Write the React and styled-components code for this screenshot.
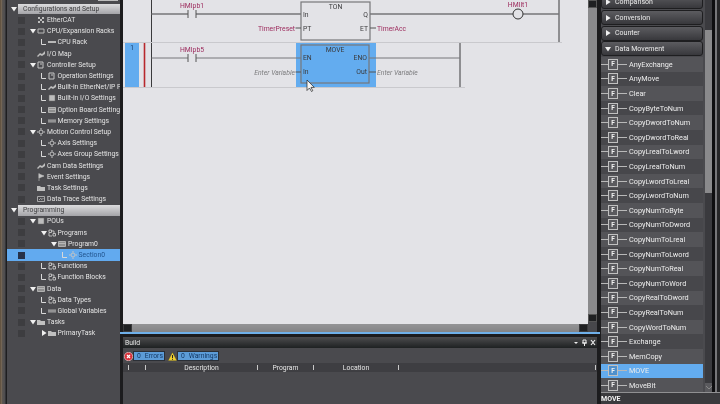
import React from 'react';
import styled, { createGlobalStyle } from 'styled-components';

const FONT = 'Roboto, "Liberation Sans", sans-serif';

const Global = createGlobalStyle`
  html, body { margin: 0; padding: 0; background: #1c1c1e; }
  body { width: 720px; height: 404px; overflow: hidden; font-family: ${FONT}; }
`;

const Screen = styled.div`
  width: 720px;
  height: 404px;
  display: flex;
  overflow: hidden;
  background: #1c1c1e;
  filter: blur(0.4px);
`;

/* left project tree */
const Sidebar = styled.div`
  width: 120px;
  flex: none;
  display: flex;
  background: #4a4a4e;
  overflow: hidden;
`;

const EdgeStrip = styled.div`
  width: 7px;
  flex: none;
  background: linear-gradient(90deg, #3c342c 0, #8a7458 1px, #5c5650 2px, #4c4c50 5px, #1e1e20 6px);
`;

const Tree = styled.div`
  flex: 1;
  min-width: 0;
  display: flex;
  flex-direction: column;
`;

const TopStub = styled.div`
  height: 1.3px;
  width: 20px;
  flex: none;
  margin: 0 0 2px 91px;
  border: solid #bdbdbd;
  border-width: 0 1px 1px 1px;
  box-sizing: border-box;
`;

const Row = styled.div`
  height: 11.2px;
  flex: none;
  display: flex;
  align-items: center;
  white-space: nowrap;
  font-size: 6.8px;
  color: ${p => (p.$selected ? '#22558f' : '#e4e4e4')};
  background: ${p => (p.$selected ? '#62aaef' : 'transparent')};
`;

const Check = styled.span`
  width: 7px;
  height: 7px;
  margin-left: 11px;
  flex: none;
  background: ${p => (p.$selected ? '#26324a' : '#3d3d40')};
`;

const Indent = styled.span`
  flex: none;
  display: flex;
  align-items: center;
  justify-content: flex-end;
  width: ${p => p.$width}px;
  margin-right: 1px;
`;

const Header = styled.div`
  height: 11.2px;
  flex: none;
  display: flex;
  align-items: center;
  padding-left: 4px;
`;

const HeaderBar = styled.div`
  flex: 1;
  height: 10.5px;
  margin-left: 1px;
  padding-left: 5px;
  display: flex;
  align-items: center;
  font-size: 6.8px;
  color: #3c3c3e;
  background: linear-gradient(180deg, #dcdcde, #a4a4a8);
`;

const IconBox = styled.svg`
  width: 8px;
  height: 8px;
  flex: none;
  margin-right: 2px;
`;

const ArrowSvg = styled.svg`
  width: 6px;
  height: 6px;
  flex: none;
`;

const Arrow = ({ open }) => (
  <ArrowSvg viewBox="0 0 6 6">
    <path d={open ? 'M0 1h6L3 5.6z' : 'M1 0v6l4.6-3z'} fill="#f0f0f0" />
  </ArrowSvg>
);

const ElbowSvg = styled.svg`
  width: 5px;
  height: 6px;
  flex: none;
  margin-right: 1px;
`;

const Elbow = () => (
  <ElbowSvg viewBox="0 0 5 6">
    <path d="M.5 0v5.5H5" stroke="#d8d8d8" fill="none" />
  </ElbowSvg>
);

const glyphs = {
  grid: <path d="M1 1h2v2H1zM5 1h2v2H5zM1 5h2v2H1zM5 5h2v2H5zM3 3h2v2H3z" fill="#bdbdbd" />,
  rack: <path d="M1 2h6v4H1z" fill="none" stroke="#b8b8b8" />,
  bar: <path d="M0 3h8v2H0z" fill="#b8b8b8" />,
  map: <path d="M0 6l3-3 2 1 3-3v3L5 6 3 5 1 7z" fill="#bdbdbd" />,
  doc: <path d="M1 1h5v6H1zM3 3h2" fill="none" stroke="#c4c4c4" />,
  sheet: <path d="M1 1h6v6H1z" fill="#bdbdbd" stroke="#6a6a6a" strokeWidth=".5" />,
  gear: (
    <g fill="none" stroke="#c4c4c4">
      <circle cx="4" cy="4" r="2" />
      <path d="M4 0v1.5M4 6.5V8M0 4h1.5M6.5 4H8" />
    </g>
  ),
  flag: <path d="M2 0v8M2 1l5 2-5 2z" fill="#c4c4c4" stroke="#c4c4c4" strokeWidth=".6" />,
  folder: <path d="M0 2h3l1 1h4v4H0z" fill="#c0c0c0" />,
  chart: <path d="M.5 1.5h7v5h-7zM2 5l1.5-1.5L5 4.5 6.5 3" fill="none" stroke="#c0c0c0" strokeWidth=".8" />,
  block: <path d="M1 1h2.5v2.5H1zM5 4.5h2.5V7H5zM3.5 2H6v2.5M1 4v3h3" fill="none" stroke="#c8c8c8" strokeWidth=".9" />,
  table: <path d="M.5 1.5h7v5h-7zM.5 3.5h7" fill="#8f8f8f" stroke="#c0c0c0" strokeWidth=".8" />,
  vars: <path d="M1 2v4M3 2v4M5 2v4M7 2v4M0 4h8" stroke="#bdbdbd" strokeWidth=".8" />,
};

const Glyph = ({ name }) => <IconBox viewBox="0 0 8 8">{glyphs[name]}</IconBox>;

const Label = styled.span`
  flex: none;
`;

// level 0 sits directly under a section header
const TreeRow = ({ level, arrow, elbow, icon, text, selected }) => (
  <Row $selected={selected}>
    <Check $selected={selected} />
    <Indent $width={11 + level * 10.5}>
      {arrow && <Arrow open={arrow === 'open'} />}
      {elbow && <Elbow />}
    </Indent>
    <Glyph name={icon} />
    <Label>{text}</Label>
  </Row>
);

const projectRows = [
  { header: 'Configurations and Setup' },
  { level: 0, icon: 'grid', text: 'EtherCAT' },
  { level: 0, arrow: 'open', icon: 'rack', text: 'CPU/Expansion Racks' },
  { level: 1, elbow: true, icon: 'bar', text: 'CPU Rack' },
  { level: 0, icon: 'map', text: 'I/O Map' },
  { level: 0, arrow: 'open', icon: 'doc', text: 'Controller Setup' },
  { level: 1, elbow: true, icon: 'doc', text: 'Operation Settings' },
  { level: 1, elbow: true, icon: 'map', text: 'Built-in EtherNet/IP Port Settings' },
  { level: 1, elbow: true, icon: 'sheet', text: 'Built-in I/O Settings' },
  { level: 1, elbow: true, icon: 'table', text: 'Option Board Settings' },
  { level: 1, elbow: true, icon: 'vars', text: 'Memory Settings' },
  { level: 0, arrow: 'open', icon: 'gear', text: 'Motion Control Setup' },
  { level: 1, elbow: true, icon: 'gear', text: 'Axis Settings' },
  { level: 1, elbow: true, icon: 'gear', text: 'Axes Group Settings' },
  { level: 0, icon: 'map', text: 'Cam Data Settings' },
  { level: 0, icon: 'flag', text: 'Event Settings' },
  { level: 0, icon: 'folder', text: 'Task Settings' },
  { level: 0, icon: 'chart', text: 'Data Trace Settings' },
  { header: 'Programming' },
  { level: 0, arrow: 'open', icon: 'sheet', text: 'POUs' },
  { level: 1, arrow: 'open', icon: 'block', text: 'Programs' },
  { level: 2, arrow: 'open', icon: 'table', text: 'Program0' },
  { level: 3, elbow: true, icon: 'gear', text: 'Section0', selected: true },
  { level: 1, elbow: true, icon: 'block', text: 'Functions' },
  { level: 1, elbow: true, icon: 'block', text: 'Function Blocks' },
  { level: 0, arrow: 'open', icon: 'table', text: 'Data' },
  { level: 1, elbow: true, icon: 'block', text: 'Data Types' },
  { level: 1, elbow: true, icon: 'vars', text: 'Global Variables' },
  { level: 0, arrow: 'open', icon: 'folder', text: 'Tasks' },
  { level: 1, arrow: 'closed', icon: 'folder', text: 'PrimaryTask' },
];

/* centre: ladder editor and build panel */
const Main = styled.div`
  flex: 1;
  min-width: 0;
  display: flex;
  flex-direction: column;
`;

const EditorArea = styled.div`
  height: 332px;
  flex: none;
  display: flex;
  padding: 0 3px;
`;

const EditorColumn = styled.div`
  flex: 1;
  min-width: 0;
  display: flex;
  flex-direction: column;
`;

const Canvas = styled.div`
  height: 324px;
  flex: none;
  background: #e3e3e7;
  overflow: hidden;
`;

const Rung = styled.div`
  height: ${p => p.$height}px;
  width: ${p => p.$width}px;
  border-bottom: 1px solid #c9c9cd;
  display: flex;
`;

const RungNumber = styled.div`
  width: 14px;
  flex: none;
  margin: 0 1px 0 2px;
  padding-top: 1px;
  text-align: center;
  font-size: 6.5px;
  line-height: 9px;
  color: #183a66;
  background: ${p => (p.$active ? '#63acef' : 'transparent')};
`;

const Ladder = styled.svg`
  flex: none;
  display: block;
  overflow: visible;
  font-family: ${FONT};
  font-size: 6.8px;
`;

const HScroll = styled.div`
  height: 8px;
  flex: none;
  display: flex;
  justify-content: space-between;
  background: linear-gradient(180deg, #949496, #848486);
`;

const ScrollEnd = styled.div`
  width: 9px;
  height: 8px;
  background: #1f2022;
  border: 1px solid #3a3a3c;
  box-sizing: border-box;
`;

const VScroll = styled.div`
  width: 9px;
  flex: none;
  display: flex;
  flex-direction: column;
  background: #8a8a8c;
`;

const ScrollBox = styled.div`
  width: 9px;
  height: 8px;
  flex: none;
  background: #1f2022;
  border: 1px solid #555;
  box-sizing: border-box;
`;

const ScrollRest = styled.div`
  flex: 1;
`;

const ScrollCorner = styled.div`
  height: 10px;
  flex: none;
  background: #47474b;
`;

const AccentLine = styled.div`
  height: 2px;
  flex: none;
  background: #6fb0ea;
`;

const Build = styled.div`
  flex: 1;
  min-height: 0;
  display: flex;
  flex-direction: column;
  margin: 3px 3px 0 3px;
  background: #4a4a4e;
`;

const BuildTitle = styled.div`
  height: 11px;
  flex: none;
  display: flex;
  align-items: center;
  justify-content: space-between;
  padding: 0 1px 0 2px;
  font-size: 6.8px;
  color: #e6e6e6;
  background: linear-gradient(180deg, #4c4c4e, #1e2122);
`;

const Filters = styled.div`
  height: 14px;
  flex: none;
  display: flex;
  align-items: center;
  gap: 3px;
  padding: 1px 0 0 1px;
`;

const FilterItem = styled.div`
  display: flex;
  align-items: center;
`;

const FilterText = styled.span`
  height: 8px;
  display: flex;
  align-items: center;
  gap: 4px;
  padding: 0 1px 0 3px;
  font-size: 6.8px;
  color: #153a66;
  background: #5c9cd8;
  border: 1px solid #2b2f36;
`;

const Columns = styled.div`
  height: 9px;
  flex: none;
  display: grid;
  grid-template-columns: 6px 17px 112px 56px 85px 197px;
  align-items: center;
  font-size: 6.8px;
  color: #e6e6e6;
  background: #3e3e42;
`;

const Column = styled.div`
  height: 5px;
  display: flex;
  align-items: center;
  justify-content: center;
  border-right: 1px solid #c8c8c8;
`;

/* right toolbox */
const Toolbox = styled.div`
  width: 120px;
  flex: none;
  display: flex;
  flex-direction: column;
  background: #4a4a4e;
  border-left: 1px solid #1c1c1e;
  box-sizing: border-box;
`;

const ToolboxBody = styled.div`
  height: 392px;
  flex: none;
  display: flex;
  overflow: hidden;
`;

const ToolboxList = styled.div`
  width: 102px;
  flex: none;
  margin-top: -5.7px;
  display: flex;
  flex-direction: column;
`;

const Group = styled.div`
  height: 15px;
  margin-bottom: 0.7px;
  flex: none;
  display: flex;
  align-items: center;
  gap: 4px;
  padding-left: 3px;
  font-size: 7px;
  color: #ececec;
  border: 1px solid #1e1e20;
  border-radius: 3px;
  box-sizing: border-box;
  background: linear-gradient(180deg, #5c5c60, #38383c);
`;

const Item = styled.div`
  height: 14.6px;
  flex: none;
  display: flex;
  align-items: center;
  font-size: 7.3px;
  color: #ececec;
  background: ${p => (p.$selected ? '#63acef' : p.$odd ? '#545458' : '#47474b')};
`;

const Wire = styled.span`
  height: 1px;
  width: ${p => p.$width}px;
  flex: none;
  background: #b8b8b8;
`;

const FuncIcon = styled.span`
  width: 8px;
  height: 9px;
  flex: none;
  display: flex;
  align-items: center;
  justify-content: center;
  font-size: 6.5px;
  font-weight: 700;
  color: #f0f0f0;
  background: ${p => (p.$selected ? '#4f90cc' : '#5a5a5e')};
  border: 1px solid #c0c0c0;
`;

const ItemName = styled.span`
  margin-left: 2px;
  white-space: nowrap;
`;

const ToolScroll = styled.div`
  width: 7px;
  flex: none;
  margin-left: 2px;
  display: flex;
  flex-direction: column;
  justify-content: space-between;
  background: #3a3a3e;
`;

const ToolThumb = styled.div`
  height: 163px;
  margin-top: 30px;
  flex: none;
  background: #8a8a8c;
`;

const ToolArrow = styled.div`
  height: 9px;
  flex: none;
  display: flex;
  align-items: center;
  justify-content: center;
  background: #5a5a5e;
`;

const ToolEdge = styled.div`
  flex: 1;
  background: linear-gradient(90deg, #0e0e10 0, #0e0e10 3px, #77777a 3px, #77777a 5px, #262628 5px);
`;

const SelectedName = styled.div`
  height: 12px;
  flex: none;
  display: flex;
  align-items: center;
  font-size: 7px;
  font-weight: 700;
  color: #f2f2f2;
  border-top: 1px solid #909092;
  background: #3a3a3d;
  box-sizing: border-box;
`;

const items = [
  'AnyExchange', 'AnyMove', 'Clear', 'CopyByteToNum', 'CopyDwordToNum', 'CopyDwordToReal',
  'CopyLrealToLword', 'CopyLrealToNum', 'CopyLwordToLreal', 'CopyLwordToNum', 'CopyNumToByte',
  'CopyNumToDword', 'CopyNumToLreal', 'CopyNumToLword', 'CopyNumToReal', 'CopyNumToWord',
  'CopyRealToDword', 'CopyRealToNum', 'CopyWordToNum', 'Exchange', 'MemCopy', 'MOVE', 'MoveBit',
];

const WIRE = '#77777a';
const INK = '#3a3a3c';
const VAR = '#9c2a5c';

const Contact = ({ x, y, labelY, label }) => (
  <g>
    <text x={x + 4} y={labelY} textAnchor="middle" fill={VAR}>{label}</text>
    <path d={`M${x} ${y - 4}v8M${x + 8} ${y - 4}v8`} stroke="#555" strokeWidth="1" />
  </g>
);

const FunctionBlock = ({ x, w, y, name, left, right }) => (
  <g fill={INK}>
    <rect x={x} y={y} width={w} height={38} fill="none" stroke="#77777a" strokeWidth="1.2" />
    <text x={x + w / 2} y={y + 6.5} textAnchor="middle">{name}</text>
    <text x={x + 2} y={y + 14.5}>{left[0]}</text>
    <text x={x + 2} y={y + 28.5}>{left[1]}</text>
    <text x={x + w - 2} y={y + 14.5} textAnchor="end">{right[0]}</text>
    <text x={x + w - 2} y={y + 28.5} textAnchor="end">{right[1]}</text>
  </g>
);

const TopRung = () => (
  <Ladder width="423" height="42" viewBox="0 0 423 42">
    <path d="M11.5 -2V42M419 -2V42" stroke={INK} strokeWidth="1" />
    <path d="M11.5 14H48M56 14H161M230 14H373M383 14H419" stroke={WIRE} strokeWidth="1.5" fill="none" />
    <Contact x={48} y={14} labelY={7.5} label="HMIpb1" />
    <FunctionBlock x={161} w={69} y={2} name="TON" left={['In', 'PT']} right={['Q', 'ET']} />
    <text x={155} y={30.5} textAnchor="end" fill={VAR}>TimerPreset</text>
    <text x={237} y={30.5} fill={VAR}>TimerAcc</text>
    <path d="M155.5 28h5.5M230 28h6" stroke="#555" strokeWidth="1" />
    <circle cx={378} cy={14} r={5} fill="none" stroke="#333" strokeWidth="1" />
    <text x={378} y={6.5} textAnchor="middle" fill={VAR}>HMIlt1</text>
  </Ladder>
);

const BottomRung = () => (
  <Ladder width="326" height="44" viewBox="0 0 326 44">
    <rect x={156} y={0} width={80} height={44} fill="#63acef" />
    <path d="M4.5 0V44" stroke="#b8282c" strokeWidth="1.6" />
    <path d="M11.5 0V44M320 0V44" stroke={INK} strokeWidth="1" />
    <path d="M11.5 15H48M56 15H161M229 15H320" stroke={WIRE} strokeWidth="1" fill="none" />
    <Contact x={48} y={15} labelY={8.5} label="HMIpb5" />
    <FunctionBlock x={161} w={68} y={2} name="MOVE" left={['EN', 'In']} right={['ENO', 'Out']} />
    <g fontStyle="italic" fill="#7c7c7e">
      <text x={155} y={31.5} textAnchor="end">Enter Variable</text>
      <text x={237} y={31.5}>Enter Variable</text>
    </g>
    <path d="M155.5 29h5.5M229 29h7" stroke="#555" strokeWidth="1" />
    <path d="M167 37v10.5l2.5-2.5 2 3.5 1.3-.8-1.8-3.3h3.3z" fill="#f4f4f4" stroke="#222" strokeWidth=".7" />
  </Ladder>
);

const StatusSvg = styled.svg`
  width: 9px;
  height: 9px;
  flex: none;
`;

const ErrorIcon = () => (
  <StatusSvg viewBox="0 0 9 9">
    <circle cx="4.5" cy="4.5" r="4.2" fill="#d8303a" stroke="#f0e0e0" strokeWidth=".6" />
    <path d="M3 3l3 3M6 3L3 6" stroke="#fff" strokeWidth="1.2" />
  </StatusSvg>
);

const WarnIcon = () => (
  <StatusSvg viewBox="0 0 9 9">
    <path d="M4.5.3L8.9 8.7H.1z" fill="#f0d030" stroke="#2a2a2a" strokeWidth=".3" />
    <path d="M4.5 3v3M4.5 6.8v1" stroke="#222" strokeWidth="1" />
  </StatusSvg>
);

export default function App() {
  return (
    <Screen>
      <Global />
      <Sidebar>
        <EdgeStrip />
        <Tree>
          <TopStub />
          {projectRows.map(r =>
            r.header ? (
              <Header key={r.header}>
                <Arrow open />
                <HeaderBar>{r.header}</HeaderBar>
              </Header>
            ) : (
              <TreeRow key={r.text} {...r} />
            )
          )}
        </Tree>
      </Sidebar>

      <Main>
        <EditorArea>
          <EditorColumn>
            <Canvas>
              <Rung $height={42} $width={439}>
                <RungNumber />
                <TopRung />
              </Rung>
              <Rung $height={44} $width={342}>
                <RungNumber $active>1</RungNumber>
                <BottomRung />
              </Rung>
            </Canvas>
            <HScroll>
              <ScrollEnd />
              <ScrollEnd />
            </HScroll>
          </EditorColumn>
          <VScroll>
            <ScrollBox />
            <ScrollRest />
            <ScrollBox />
            <ScrollCorner />
          </VScroll>
        </EditorArea>
        <AccentLine />
        <Build>
          <BuildTitle>
            Build
            <svg width="22" height="7" viewBox="0 0 22 7">
              <path d="M0 3h4L2 5z" fill="#eee" />
              <path d="M9 1h3v3H9zM10.5 4v3M8 4h5" stroke="#eee" fill="none" />
              <path d="M17 1l4 5M21 1l-4 5" stroke="#eee" strokeWidth="1.2" />
            </svg>
          </BuildTitle>
          <Filters>
            <FilterItem>
              <ErrorIcon />
              <FilterText>0 <span>Errors</span></FilterText>
            </FilterItem>
            <FilterItem>
              <WarnIcon />
              <FilterText>0 <span>Warnings</span></FilterText>
            </FilterItem>
          </Filters>
          <Columns>
            <Column />
            <Column />
            <Column>Description</Column>
            <Column>Program</Column>
            <Column>Location</Column>
            <Column />
          </Columns>
        </Build>
      </Main>

      <Toolbox>
        <ToolboxBody>
          <ToolboxList>
            <Group><Arrow />Comparison</Group>
            <Group><Arrow />Conversion</Group>
            <Group><Arrow />Counter</Group>
            <Group><Arrow open />Data Movement</Group>
            {items.map((name, i) => (
              <Item key={name} $odd={i % 2 === 0} $selected={name === 'MOVE'}>
                <Wire $width={7} />
                <FuncIcon $selected={name === 'MOVE'}>F</FuncIcon>
                <Wire $width={9} />
                <ItemName>{name}</ItemName>
              </Item>
            ))}
          </ToolboxList>
          <ToolScroll>
            <ToolThumb />
            <ToolArrow>
              <svg width="6" height="4" viewBox="0 0 6 4"><path d="M0 0l3 3 3-3" fill="none" stroke="#888" /></svg>
            </ToolArrow>
          </ToolScroll>
          <ToolEdge />
        </ToolboxBody>
        <SelectedName>MOVE</SelectedName>
      </Toolbox>
    </Screen>
  );
}
